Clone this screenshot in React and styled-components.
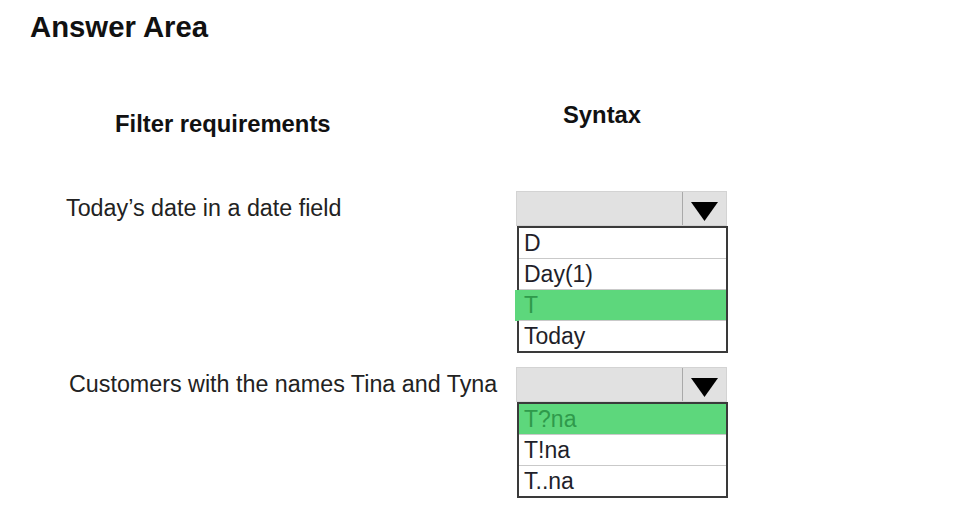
import React from "react";
import styled, { createGlobalStyle } from "styled-components";

const questions = [
  {
    label: "Today’s date in a date field",
    indent: 66,
    options: ["D", "Day(1)", "T", "Today"],
    selected: 2,
    bleed: true,
  },
  {
    label: "Customers with the names Tina and Tyna",
    indent: 69,
    options: ["T?na", "T!na", "T..na"],
    selected: 0,
    bleed: false,
  },
];

const App = () => {
  return (
    <>
      <GlobalStyle />
      <Page>
        <Title>Answer Area</Title>
        <ColumnHeads>
          <Head $indent={115} $drop={9}>
            Filter requirements
          </Head>
          <Head $indent={47} $drop={0}>
            Syntax
          </Head>
        </ColumnHeads>
        <Questions>
          {questions.map((q, idx) => (
            <QuestionRow key={idx}>
              <Label $indent={q.indent}>{q.label}</Label>
              <Dropdown>
                <SelectBox>
                  <SelectValue />
                  <ArrowBox>
                    <svg width="27" height="19" viewBox="0 0 27 19">
                      <polygon points="0,0 27,0 13.5,19" fill="#000" />
                    </svg>
                  </ArrowBox>
                </SelectBox>
                <OptionList>
                  {q.options.map((opt, i) => (
                    <Option
                      key={opt}
                      $selected={i === q.selected}
                      $bleed={i === q.selected && q.bleed}
                    >
                      {opt}
                    </Option>
                  ))}
                </OptionList>
              </Dropdown>
            </QuestionRow>
          ))}
        </Questions>
      </Page>
    </>
  );
};

export default App;

// Styled-components
const GlobalStyle = createGlobalStyle`
  body {
    margin: 0;
    background: #fff;
    font-family: "Liberation Sans", Arial, sans-serif;
  }
`;

const Page = styled.div`
  width: 964px;
  height: 529px;
  background: #fff;
  color: #1f1f1f;
`;

const Title = styled.h1`
  margin: 0;
  padding: 12px 0 0 30px;
  font-size: 29.3px;
  line-height: 29px;
  font-weight: bold;
  color: #111;
`;

const ColumnHeads = styled.div`
  display: grid;
  grid-template-columns: 516px 212px;
  align-items: start;
  margin-top: 62px;
`;

const Head = styled.div`
  padding-left: ${(p) => p.$indent}px;
  margin-top: ${(p) => p.$drop}px;
  font-size: 23.8px;
  line-height: 23px;
  font-weight: bold;
  color: #111;
`;

const Questions = styled.div`
  display: flex;
  flex-direction: column;
  gap: 14px;
  margin-top: 56px;
`;

const QuestionRow = styled.div`
  display: grid;
  grid-template-columns: 516px 212px;
  align-items: start;
`;

const Label = styled.div`
  padding-left: ${(p) => p.$indent}px;
  padding-top: 6px;
  font-size: 23.3px;
  line-height: 23px;
  color: #222;
`;

const Dropdown = styled.div`
  display: flex;
  flex-direction: column;
  width: 212px;
`;

const SelectBox = styled.div`
  display: flex;
  box-sizing: border-box;
  width: 211px;
  height: 35px;
  background: #e1e1e1;
  border: 1px solid #d3d3d3;
`;

const SelectValue = styled.div`
  flex: 1;
`;

const ArrowBox = styled.div`
  display: flex;
  align-items: center;
  justify-content: center;
  width: 44px;
  padding-top: 6px;
  box-sizing: border-box;
  border-left: 1px solid #a9a9a9;
`;

const OptionList = styled.div`
  box-sizing: border-box;
  width: 211px;
  margin-left: 1px;
  border: 2px solid #3a3a3a;
  background: #fff;
`;

const Option = styled.div`
  height: 30px;
  line-height: 30px;
  padding-left: 5px;
  font-size: 23px;
  color: ${(p) => (p.$selected ? "#2f9a4b" : "#1f1f2a")};
  background: ${(p) => (p.$selected ? "#5dd77c" : "#fff")};
  box-shadow: ${(p) => (p.$bleed ? "-4px 0 0 #5dd77c" : "none")};
  border-bottom: 1px solid #c9c9c9;
  &:last-child {
    border-bottom: none;
  }
`;
